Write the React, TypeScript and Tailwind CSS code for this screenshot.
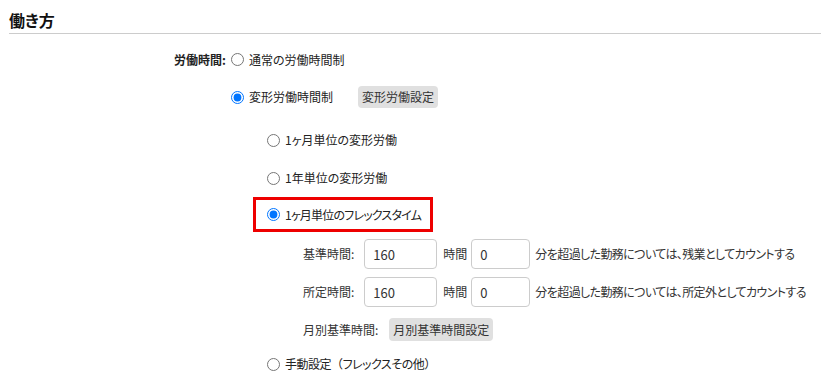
import React from "react";

const noop = () => {};

function Radio({ name, checked }: { name: string; checked?: boolean }) {
  return (
    <input
      type="radio"
      name={name}
      checked={!!checked}
      onChange={noop}
      className="m-0 size-[13px] shrink-0"
    />
  );
}

function TimeRow({ label, after }: { label: string; after: string }) {
  return (
    <div className="flex h-[30px] items-center">
      <span className="mr-[10px]">{label}</span>
      <input
        type="text"
        defaultValue="160"
        className="h-[30px] w-[73px] rounded-[4px] border border-[#cccccc] bg-white pl-[8px] text-[13px] text-[#333] outline-none"
      />
      <span className="ml-[6px] mr-[4px]">時間</span>
      <input
        type="text"
        defaultValue="0"
        className="h-[30px] w-[59px] rounded-[4px] border border-[#cccccc] bg-white pl-[8px] text-[13px] text-[#333] outline-none"
      />
      <span className="ml-[5px] tracking-[-0.6px]">{after}</span>
    </div>
  );
}

export default function App() {
  return (
    <div className="h-[382px] w-[821px] overflow-hidden bg-white font-['Meiryo_UI','Noto_Sans_CJK_JP',sans-serif] text-[12px] text-[#222] [font-feature-settings:'palt']">
      {/* Section header */}
      <div className="ml-[9px] border-b border-[#cccccc] pt-[8px] pb-[1px]">
        <h2 className="text-[16px] leading-[24px] font-bold text-[#111]">働き方</h2>
      </div>

      <div className="flex pt-[10px]">
        <div className="flex h-[31px] w-[231px] shrink-0 items-center justify-end pr-[5px] font-bold">
          労働時間:
        </div>

        <div className="flex flex-col">
          <label className="flex h-[31px] items-center gap-[5px]">
            <Radio name="worktype" />
            <span>通常の労働時間制</span>
          </label>

          <div className="flex h-[44px] items-center">
            <label className="flex items-center gap-[5px]">
              <Radio name="worktype" checked />
              <span>変形労働時間制</span>
            </label>
            <button className="ml-[25px] h-[22px] rounded-[4px] bg-[#e0e0e0] px-[4px] text-[12px] text-[#333]">
              変形労働設定
            </button>
          </div>

          {/* Variable work options */}
          <div className="ml-[22px] mt-[2px] flex flex-col">
            <label className="flex h-[38px] items-center gap-[5px] pl-[14px]">
              <Radio name="flex" />
              <span>1ヶ月単位の変形労働</span>
            </label>
            <label className="flex h-[38px] items-center gap-[5px] pl-[14px]">
              <Radio name="flex" />
              <span>1年単位の変形労働</span>
            </label>
            <label className="flex h-[35px] w-[180px] items-center gap-[5px] whitespace-nowrap border-3 border-[#ee0000] pl-[11px]">
              <Radio name="flex" checked />
              <span className="tracking-[-0.8px]">1ヶ月単位のフレックスタイム</span>
            </label>

            <div className="flex flex-col pl-[50px] text-[#333]">
              <div className="mt-[7px]">
                <TimeRow label="基準時間:" after="分を超過した勤務については、残業としてカウントする" />
              </div>
              <div className="mt-[8px]">
                <TimeRow label="所定時間:" after="分を超過した勤務については、所定外としてカウントする" />
              </div>
              <div className="mt-[11px] flex h-[23px] items-center">
                <span className="mr-[11px]">月別基準時間:</span>
                <button className="h-[23px] rounded-[4px] bg-[#e0e0e0] px-[4px] text-[12px] text-[#333]">
                  月別基準時間設定
                </button>
              </div>
            </div>

            <label className="mt-[12px] flex h-[22px] items-center gap-[5px] pl-[14px]">
              <Radio name="flex" />
              <span className="tracking-[-0.5px]">
                手動設定<span className="[font-feature-settings:normal]">（</span>フレックスその他
                <span className="[font-feature-settings:normal]">）</span>
              </span>
            </label>
          </div>
        </div>
      </div>
    </div>
  );
}
